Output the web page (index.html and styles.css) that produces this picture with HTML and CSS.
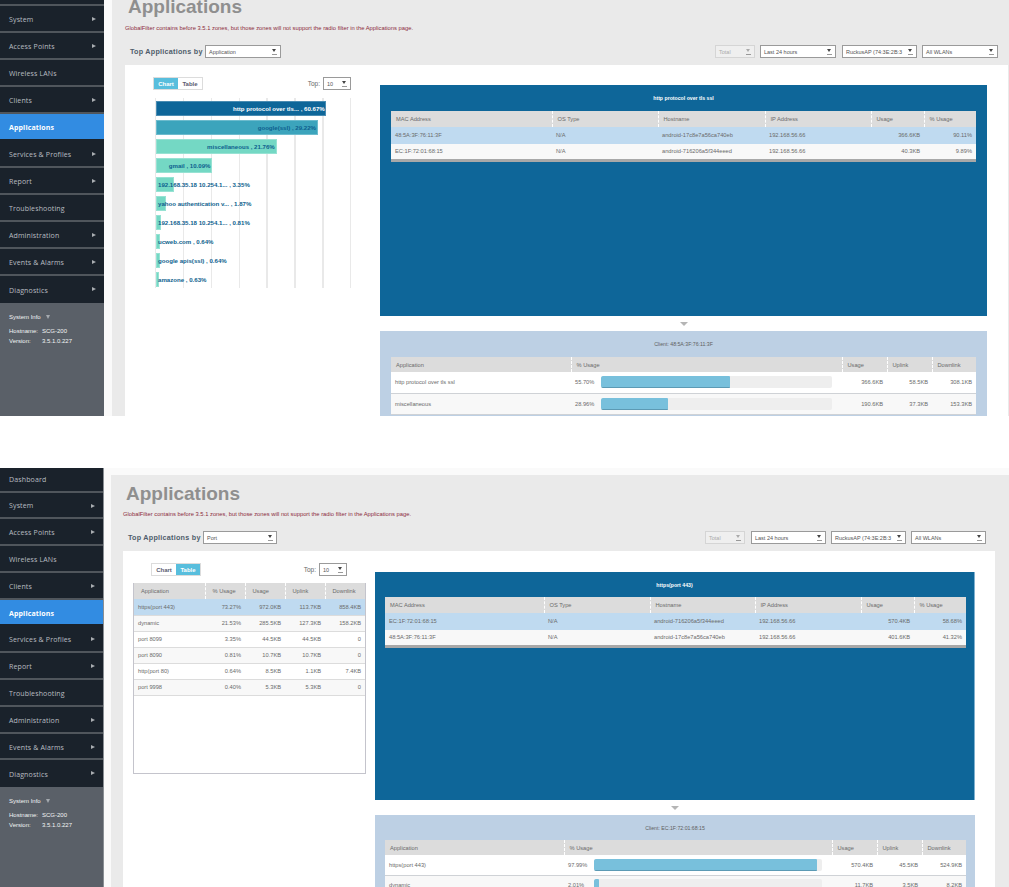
FILE: index.html
```html
<!DOCTYPE html>
<html lang="en">
<head>
<meta charset="utf-8">
<title>Applications</title>
<link rel="stylesheet" href="styles.css">
</head>
<body>
<section class="shot shot-a">
  <nav class="side">
    <ul class="menu">
      <li class="item item-cut"></li>
      <li class="item more">System</li>
      <li class="item more">Access Points</li>
      <li class="item">Wireless LANs</li>
      <li class="item more">Clients</li>
      <li class="item active">Applications</li>
      <li class="item more">Services &amp; Profiles</li>
      <li class="item more">Report</li>
      <li class="item">Troubleshooting</li>
      <li class="item more">Administration</li>
      <li class="item more">Events &amp; Alarms</li>
      <li class="item more last">Diagnostics</li>
    </ul>
    <div class="sysinfo">
      <div class="sys-head">System Info <span class="tri-down"></span></div>
      <div class="sys-row"><span class="sys-key">Hostname:</span><span>SCG-200</span></div>
      <div class="sys-row"><span class="sys-key">Version:</span><span>3.5.1.0.227</span></div>
    </div>
  </nav>
  <main class="main">
    <h1 class="title">Applications</h1>
    <p class="warn">GlobalFilter contains before 3.5.1 zones, but those zones will not support the radio filter in the Applications page.</p>
    <div class="filters">
      <span class="by">Top Applications by</span>
      <div class="sel sel-by">Application<span class="caret"></span></div>
      <span class="spacer"></span>
      <div class="sel sel-total off">Total<span class="caret"></span></div>
      <div class="sel sel-time">Last 24 hours<span class="caret"></span></div>
      <div class="sel sel-ap">RuckusAP (74:3E:2B:3<span class="caret"></span></div>
      <div class="sel sel-wlan">All WLANs<span class="caret"></span></div>
    </div>
    <div class="content">
      <div class="left">
        <div class="left-bar">
          <div class="toggle"><span class="tg on">Chart</span><span class="tg">Table</span></div>
          <div class="top"><span>Top:</span><div class="sel sel-top">10<span class="caret"></span></div></div>
        </div>
        <div class="chart">
          <div class="bar-row"><div class="bar b1" style="width:86.7%"></div><span class="lbl lbl-in lbl-white" style="right:13.9%">http protocol over tls... , 60.67%</span></div>
          <div class="bar-row"><div class="bar b2" style="width:82.6%"></div><span class="lbl lbl-in" style="right:18.4%">google(ssl) , 29.22%</span></div>
          <div class="bar-row"><div class="bar b3" style="width:61.5%"></div><span class="lbl lbl-in" style="right:39.4%">miscellaneous , 21.76%</span></div>
          <div class="bar-row"><div class="bar b3" style="width:28.7%"></div><span class="lbl lbl-in" style="right:72.2%">gmail , 10.09%</span></div>
          <div class="bar-row"><div class="bar b3" style="width:9.2%"></div><span class="lbl">192.168.35.18 10.254.1... , 3.35%</span></div>
          <div class="bar-row"><div class="bar b3" style="width:5.1%"></div><span class="lbl">yahoo authentication v... , 1.87%</span></div>
          <div class="bar-row"><div class="bar b3" style="width:2.4%"></div><span class="lbl">192.168.35.18 10.254.1... , 0.81%</span></div>
          <div class="bar-row"><div class="bar b3" style="width:1.8%"></div><span class="lbl">ucweb.com , 0.64%</span></div>
          <div class="bar-row"><div class="bar b3" style="width:1.8%"></div><span class="lbl">google apis(ssl) , 0.64%</span></div>
          <div class="bar-row"><div class="bar b3" style="width:1.4%"></div><span class="lbl">amazone , 0.63%</span></div>
        </div>
      </div>
      <div class="right">
        <div class="detail">
          <div class="cap cap-white">http protocol over tls ssl</div>
          <table class="grid grid-top">
            <colgroup><col class="c-mac"><col class="c-os"><col class="c-host"><col class="c-ip"><col class="c-use"><col class="c-pct"></colgroup>
            <thead><tr><th>MAC Address</th><th>OS Type</th><th>Hostname</th><th>IP Address</th><th>Usage</th><th>% Usage</th></tr></thead>
            <tbody>
              <tr class="sel-row"><td>48:5A:3F:76:11:3F</td><td>N/A</td><td>android-17c8e7a56ca740eb</td><td>192.168.56.66</td><td class="num">366.6KB</td><td class="num">90.11%</td></tr>
              <tr class="alt"><td>EC:1F:72:01:68:15</td><td>N/A</td><td>android-716206a5f344eeed</td><td>192.168.56.66</td><td class="num">40.3KB</td><td class="num">9.89%</td></tr>
            </tbody>
          </table>
        </div>
        <div class="arrow-row"><span class="tri-big"></span></div>
        <div class="client">
          <div class="cap">Client: 48:5A:3F:76:11:3F</div>
          <table class="grid grid-usage">
            <colgroup><col class="u-app"><col class="u-pct"><col class="u-use"><col class="u-up"><col class="u-down"></colgroup>
            <thead><tr><th>Application</th><th>% Usage</th><th>Usage</th><th>Uplink</th><th>Downlink</th></tr></thead>
            <tbody>
              <tr><td>http protocol over tls ssl</td><td><div class="meter"><span class="m-val">55.70%</span><div class="track"><div class="fill" style="width:55.7%"></div></div></div></td><td class="num">366.6KB</td><td class="num">58.5KB</td><td class="num">308.1KB</td></tr>
              <tr class="alt"><td>miscellaneous</td><td><div class="meter"><span class="m-val">28.96%</span><div class="track"><div class="fill" style="width:29%"></div></div></div></td><td class="num">190.6KB</td><td class="num">37.3KB</td><td class="num">153.3KB</td></tr>
            </tbody>
          </table>
        </div>
      </div>
    </div>
  </main>
</section>

<section class="shot shot-b">
  <nav class="side">
    <ul class="menu">
      <li class="item item-first">Dashboard</li>
      <li class="item more">System</li>
      <li class="item more">Access Points</li>
      <li class="item">Wireless LANs</li>
      <li class="item more">Clients</li>
      <li class="item active">Applications</li>
      <li class="item more">Services &amp; Profiles</li>
      <li class="item more">Report</li>
      <li class="item">Troubleshooting</li>
      <li class="item more">Administration</li>
      <li class="item more">Events &amp; Alarms</li>
      <li class="item more last">Diagnostics</li>
    </ul>
    <div class="sysinfo">
      <div class="sys-head">System Info <span class="tri-down"></span></div>
      <div class="sys-row"><span class="sys-key">Hostname:</span><span>SCG-200</span></div>
      <div class="sys-row"><span class="sys-key">Version:</span><span>3.5.1.0.227</span></div>
    </div>
  </nav>
  <main class="main">
    <h1 class="title">Applications</h1>
    <p class="warn">GlobalFilter contains before 3.5.1 zones, but those zones will not support the radio filter in the Applications page.</p>
    <div class="filters">
      <span class="by">Top Applications by</span>
      <div class="sel sel-by">Port<span class="caret"></span></div>
      <span class="spacer"></span>
      <div class="sel sel-total off">Total<span class="caret"></span></div>
      <div class="sel sel-time">Last 24 hours<span class="caret"></span></div>
      <div class="sel sel-ap">RuckusAP (74:3E:2B:3<span class="caret"></span></div>
      <div class="sel sel-wlan">All WLANs<span class="caret"></span></div>
    </div>
    <div class="content">
      <div class="left">
        <div class="left-bar">
          <div class="toggle"><span class="tg">Chart</span><span class="tg on">Table</span></div>
          <div class="top"><span>Top:</span><div class="sel sel-top">10<span class="caret"></span></div></div>
        </div>
        <div class="port-box">
          <table class="grid grid-port">
            <colgroup><col class="p-app"><col class="p-col"><col class="p-col"><col class="p-col"><col class="p-col"></colgroup>
            <thead><tr><th>Application</th><th>% Usage</th><th>Usage</th><th>Uplink</th><th>Downlink</th></tr></thead>
            <tbody>
              <tr class="sel-row"><td>https(port 443)</td><td class="num">73.27%</td><td class="num">972.0KB</td><td class="num">113.7KB</td><td class="num">858.4KB</td></tr>
              <tr class="alt"><td>dynamic</td><td class="num">21.53%</td><td class="num">285.5KB</td><td class="num">127.3KB</td><td class="num">158.2KB</td></tr>
              <tr><td>port 8099</td><td class="num">3.35%</td><td class="num">44.5KB</td><td class="num">44.5KB</td><td class="num">0</td></tr>
              <tr class="alt"><td>port 8090</td><td class="num">0.81%</td><td class="num">10.7KB</td><td class="num">10.7KB</td><td class="num">0</td></tr>
              <tr><td>http(port 80)</td><td class="num">0.64%</td><td class="num">8.5KB</td><td class="num">1.1KB</td><td class="num">7.4KB</td></tr>
              <tr class="alt"><td>port 9998</td><td class="num">0.40%</td><td class="num">5.3KB</td><td class="num">5.3KB</td><td class="num">0</td></tr>
            </tbody>
          </table>
        </div>
      </div>
      <div class="right">
        <div class="detail">
          <div class="cap cap-white">https(port 443)</div>
          <table class="grid grid-top">
            <colgroup><col class="c-mac"><col class="c-os"><col class="c-host"><col class="c-ip"><col class="c-use"><col class="c-pct"></colgroup>
            <thead><tr><th>MAC Address</th><th>OS Type</th><th>Hostname</th><th>IP Address</th><th>Usage</th><th>% Usage</th></tr></thead>
            <tbody>
              <tr class="sel-row"><td>EC:1F:72:01:68:15</td><td>N/A</td><td>android-716206a5f344eeed</td><td>192.168.56.66</td><td class="num">570.4KB</td><td class="num">58.68%</td></tr>
              <tr class="alt"><td>48:5A:3F:76:11:3F</td><td>N/A</td><td>android-17c8e7a56ca740eb</td><td>192.168.56.66</td><td class="num">401.6KB</td><td class="num">41.32%</td></tr>
            </tbody>
          </table>
        </div>
        <div class="arrow-row"><span class="tri-big"></span></div>
        <div class="client">
          <div class="cap">Client: EC:1F:72:01:68:15</div>
          <table class="grid grid-usage">
            <colgroup><col class="u-app"><col class="u-pct"><col class="u-use"><col class="u-up"><col class="u-down"></colgroup>
            <thead><tr><th>Application</th><th>% Usage</th><th>Usage</th><th>Uplink</th><th>Downlink</th></tr></thead>
            <tbody>
              <tr><td>https(port 443)</td><td><div class="meter"><span class="m-val">97.99%</span><div class="track"><div class="fill" style="width:98%"></div></div></div></td><td class="num">570.4KB</td><td class="num">45.5KB</td><td class="num">524.9KB</td></tr>
              <tr class="alt"><td>dynamic</td><td><div class="meter"><span class="m-val">2.01%</span><div class="track"><div class="fill" style="width:2%"></div></div></div></td><td class="num">11.7KB</td><td class="num">3.5KB</td><td class="num">8.2KB</td></tr>
            </tbody>
          </table>
        </div>
      </div>
    </div>
  </main>
</section>
</body>
</html>
```
FILE: styles.css
```css
* { box-sizing: border-box; }
html, body { margin: 0; padding: 0; background: #fff; }
body { width: 1009px; height: 887px; overflow: hidden; font-family: "Liberation Sans", Arial, sans-serif; }

.shot { display: flex; overflow: hidden; background: #fafafa; }
.shot-a { height: 416px; margin-bottom: 52px; }
.shot-b { height: 419px; }

/* sidebar */
.side { display: flex; flex-direction: column; width: 104px; flex: none; background: #5a6068; }
.shot-b .side { border-right: 1px solid #8a8f94; }
.menu { list-style: none; margin: 0; padding: 0; }
.item {
  position: relative; display: flex; align-items: center; height: 27px; padding: 2px 0 0 9px;
  background: #1a222b; border-bottom: 2px solid #50565c;
  font: 7px "Open Sans", sans-serif; color: #b9bdc1; letter-spacing: .02em; white-space: nowrap;
}
.shot-b .item { height: 26.8px; }
.item.item-cut { height: 6px; padding: 0; }
.shot-b .item.item-first { height: 24.5px; padding-top: 1px; }
.item.last { border-bottom: 0; }
.item.active { background: #328ce2; color: #fff; font-weight: 700; border-bottom-color: #1a222b; }
.more::after {
  content: ""; position: absolute; right: 8px; top: 11px;
  border-left: 4px solid #a9adb1; border-top: 2.5px solid transparent; border-bottom: 2.5px solid transparent;
}
.sysinfo { padding: 10px 9px 0; color: #f2f3f4; font-size: 6px; }
.sys-head { display: flex; align-items: center; gap: 5px; height: 8px; margin-bottom: 5px; }
.tri-down { width: 0; height: 0; border-top: 4px solid #a4a9ae; border-left: 2.5px solid transparent; border-right: 2.5px solid transparent; }
.sys-row { display: flex; height: 10px; align-items: center; }
.sys-key { width: 33px; }

/* main */
.main { flex: 1; margin-left: 8px; background: #eaeaea; display: flex; flex-direction: column; min-width: 0; }
.shot-b .main { margin-left: 7px; margin-top: 7px; }
.title { margin: -3px 0 0 16px; font-size: 19px; line-height: 20px; font-weight: 700; color: #8f8f8f; }
.shot-b .title { margin: 9px 0 0 15px; }
.warn { margin: 8px 0 0 13px; font-size: 5.8px; line-height: 7px; color: #8b2a3c; white-space: nowrap; }
.shot-b .warn { margin: 7px 0 0 12px; }
.filters { display: flex; align-items: center; height: 13px; margin-top: 13px; padding: 0 11px 0 18px; }
.shot-b .filters { margin-top: 13px; padding: 0 23px 0 17px; }
.by { width: 75px; font-size: 7.2px; font-weight: 700; color: #4f5d6a; letter-spacing: .25px; white-space: nowrap; }
.spacer { flex: 1; }

.sel {
  display: flex; align-items: center; justify-content: space-between; height: 13px; padding: 0 3px;
  background: #fff; border: 1px solid #9a9a9a; border-bottom-width: 1.5px;
  font-size: 5.5px; color: #555; white-space: nowrap; overflow: hidden;
}
.sel.off { color: #aaa; border-color: #d5d5d5; background: #efefef; }
.sel-by { width: 76px; }
.shot-b .sel-by { width: 74px; }
.sel-total { width: 40px; margin-right: 5px; }
.sel-time { width: 76px; margin-right: 6px; }
.sel-ap { width: 75px; margin-right: 5px; }
.sel-wlan { width: 76px; }
.shot-b .sel-total { margin-right: 6px; }
.shot-b .sel-time { width: 75px; margin-right: 5px; }
.shot-b .sel-wlan { width: 75px; }
.sel-top { width: 28px; }
.caret { flex: none; width: 5px; height: 6px; margin-left: 1px; position: relative; border-bottom: 1px solid #999; }
.caret::before {
  content: ""; position: absolute; left: 0; top: 0;
  border-top: 3px solid #444; border-left: 2.5px solid transparent; border-right: 2.5px solid transparent;
}
.off .caret::before { border-top-color: #aaa; }

/* content */
.content { flex: 1; display: flex; margin: 7px 1px 0 13px; background: #fff; min-height: 0; }
.shot-b .content { margin: 7px 14px 0 12px; }
.left { width: 255px; flex: none; padding: 12px 0 0 28px; }
.shot-b .left { width: 252px; padding-left: 10px; }
.left-bar { display: flex; justify-content: space-between; width: 198px; height: 13px; }
.shot-b .left-bar { width: 214px; padding-left: 18px; }
.toggle { display: flex; height: 13px; border: 1px solid #dcdcdc; }
.tg { display: flex; align-items: center; justify-content: center; width: 24px; font-size: 6px; font-weight: 700; color: #5a5a70; background: #fff; }
.tg.on { background: #58bedd; color: #fff; }
.top { display: flex; align-items: center; gap: 3px; font-size: 6.5px; color: #666; }

/* chart */
.chart {
  display: flex; flex-direction: column; gap: 4px; width: 197px; height: 190px; margin: 8px 0 0 2px; padding: 3px 0 0 1px;
  background: repeating-linear-gradient(to right, #e9e9e9 0, #e9e9e9 1.4px, transparent 1.4px, transparent 27.85px);
}
.bar-row { position: relative; height: 15px; flex: none; }
.bar { height: 100%; border: 1px solid rgba(255,255,255,.25); }
.b1 { background: #0e6699; }
.b2 { background: #3ca4bc; }
.b3 { background: #74d8c4; }
.lbl { position: absolute; left: 2px; top: 0; line-height: 15px; font-size: 6.1px; font-weight: 700; color: #0e5f8e; white-space: nowrap; }
.lbl-in { left: auto; }
.lbl-white { color: #fff; }

/* tables */
.right { flex: 1; padding: 20px 21px 0 0; min-width: 0; }
.shot-b .right { padding: 21px 20px 0 0; }
.detail { height: 231px; padding: 0 11px; background: #0e6699; }
.shot-b .detail { height: 228px; padding: 0 10px; border-right: 1px solid #7fb1d0; }
.cap { height: 26px; display: flex; align-items: center; justify-content: center; font-size: 5.2px; color: #606060; }
.shot-b .cap { height: 25px; }
.cap-white { color: #fff; font-weight: 700; }
.arrow-row { display: flex; justify-content: center; align-items: center; height: 15px; }
.tri-big { width: 0; height: 0; border-top: 4px solid #b5b5b5; border-left: 4px solid transparent; border-right: 4px solid transparent; }
.client { height: 120px; padding: 0 11px; background: #bdd0e4; }
.shot-b .client { padding: 0 10px; }

.grid { width: 100%; border-collapse: collapse; table-layout: fixed; font-size: 5.7px; color: #6a6a6a; background: #fff; }
.grid th { height: 16px; padding: 0 5px; background: #dcdcdc; border-left: 1px dashed #fff; font-weight: 400; text-align: left; white-space: nowrap; }
.grid th:first-child { border-left: 0; }
.grid td { padding: 0 4px; white-space: nowrap; overflow: hidden; }
.grid .num { text-align: right; }
.grid .alt td { background: #f8f8f8; }
.grid .sel-row td { background: #bfdaf0; }

.grid-top { border-bottom: 3px solid #a8a8a8; }
.grid-top tbody td { height: 16.5px; }
.c-mac { width: 161px; }
.c-os { width: 106px; }
.c-host { width: 107px; }
.c-ip { width: 106px; }
.c-use { width: 53px; }
.c-pct { width: 52px; }
.shot-b .c-mac { width: 159px; }
.shot-b .c-host { width: 105px; }

.grid-usage th { height: 15px; }
.grid-usage tbody td { height: 21px; border-bottom: 1px solid #cfd2d6; }
.shot-b .grid-usage tbody td { height: 20px; }
.u-app { width: 180px; }
.u-pct { width: 271px; }
.u-use { width: 45px; }
.u-up { width: 45px; }
.u-down { width: 44px; }
.shot-b .u-app { width: 179px; }
.shot-b .u-pct { width: 268px; }
.meter { display: flex; align-items: center; gap: 5px; padding-right: 6px; }
.m-val { width: 21px; flex: none; }
.track { flex: 1; height: 12px; background: #eee; border-radius: 2px; overflow: hidden; }
.fill { height: 100%; background: #78c0dc; border-bottom: 1px solid #5c9ab4; border-radius: 1px; }

.port-box { width: 233px; height: 191px; margin-top: 7px; background: #fff; border: 1px solid #c4c4cc; border-top: 0; }
.grid-port tbody td { height: 16px; border-bottom: 1px solid #dcdcdc; }
.grid-port th { height: 16px; padding: 0 7px; }
.p-app { width: 71px; }
.p-col { width: 40px; }
```
